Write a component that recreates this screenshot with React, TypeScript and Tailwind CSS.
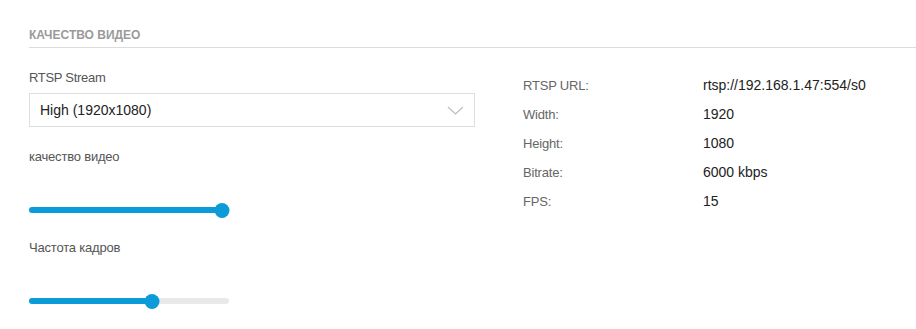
const font = { fontFamily: '"Liberation Sans", Arial, sans-serif' };

type InfoRow = { label: string; value: string };

const rows: InfoRow[] = [
  { label: "RTSP URL:", value: "rtsp://192.168.1.47:554/s0" },
  { label: "Width:", value: "1920" },
  { label: "Height:", value: "1080" },
  { label: "Bitrate:", value: "6000 kbps" },
  { label: "FPS:", value: "15" },
];

function Slider({ width, percent }: { width: number; percent: number }) {
  return (
    <div className="relative flex h-5 items-center" style={{ width }}>
      <div className="h-[6px] w-full rounded-full bg-[#e9e9e9]" />
      <div
        className="absolute left-0 h-[6px] rounded-full bg-[#0b9bd9]"
        style={{ width: `${percent}%` }}
      />
      <div
        className="absolute h-[15px] w-[15px] -translate-x-1/2 rounded-full bg-[#0b9bd9]"
        style={{ left: `${percent}%` }}
      />
    </div>
  );
}

export default function App() {
  return (
    <div className="h-[329px] w-[916px] bg-white pl-[29px] text-[#555]" style={font}>
      <div className="border-b border-[#dcdcdc] pt-[27px] pb-[4px]">
        <div className="text-[12px] leading-4 font-bold text-[#9a9a9a]">
          КАЧЕСТВО ВИДЕО
        </div>
      </div>

      <div className="flex">
        <div className="w-[446px]">
          <div className="mt-[21px] text-[13px] leading-[18px] tracking-[-0.3px]">RTSP Stream</div>
          <div className="mt-[6px] flex h-[34px] items-center justify-between border border-[#dedede] pr-[10px] pl-[10px]">
            <span className="text-[14px] text-[#222]">High (1920x1080)</span>
            <svg width="17" height="9" viewBox="0 0 17 9" fill="none">
              <path d="M1 1l7.5 7L16 1" stroke="#bdbdbd" strokeWidth="1.2" />
            </svg>
          </div>
          <div className="mt-[21px] text-[13px] leading-[18px] tracking-[-0.2px]">качество видео</div>
          <div className="mt-[34px]">
            <Slider width={193} percent={100} />
          </div>
          <div className="mt-[19px] text-[13px] leading-[18px] tracking-[-0.2px]">Частота кадров</div>
          <div className="mt-[34px]">
            <Slider width={200} percent={61.5} />
          </div>
        </div>

        <div className="ml-[48px] mt-[23px]">
          {rows.map((r) => (
            <div key={r.label} className="flex h-[29px] items-center">
              <div className="w-[180px] text-[13px] tracking-[-0.2px] text-[#666]">{r.label}</div>
              <div className="text-[14px] text-[#222]">{r.value}</div>
            </div>
          ))}
        </div>
      </div>
    </div>
  );
}
